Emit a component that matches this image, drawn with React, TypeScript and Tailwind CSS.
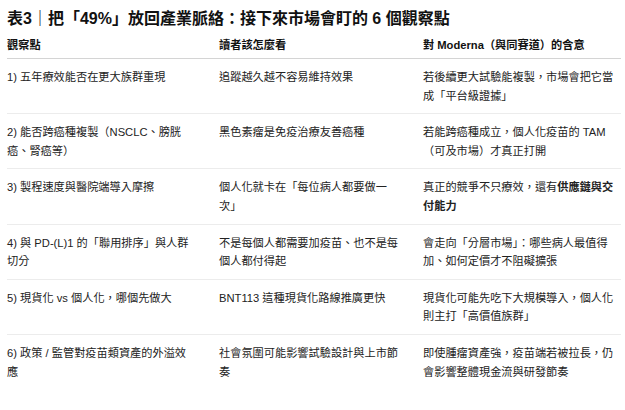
import React from "react";

type Row = { a: React.ReactNode; b: React.ReactNode; c: React.ReactNode };

const rows: Row[] = [
  {
    a: "1) 五年療效能否在更大族群重現",
    b: "追蹤越久越不容易維持效果",
    c: "若後續更大試驗能複製，市場會把它當成「平台級證據」",
  },
  {
    a: "2) 能否跨癌種複製（NSCLC、膀胱癌、腎癌等）",
    b: "黑色素瘤是免疫治療友善癌種",
    c: "若能跨癌種成立，個人化疫苗的 TAM（可及市場）才真正打開",
  },
  {
    a: "3) 製程速度與醫院端導入摩擦",
    b: "個人化就卡在「每位病人都要做一次」",
    c: (
      <>
        真正的競爭不只療效，還有<span className="font-bold">供應鏈與交付能力</span>
      </>
    ),
  },
  {
    a: "4) 與 PD-(L)1 的「聯用排序」與人群切分",
    b: "不是每個人都需要加疫苗、也不是每個人都付得起",
    c: "會走向「分層市場」：哪些病人最值得加、如何定價才不阻礙擴張",
  },
  {
    a: "5) 現貨化 vs 個人化，哪個先做大",
    b: "BNT113 這種現貨化路線推廣更快",
    c: "現貨化可能先吃下大規模導入，個人化則主打「高價值族群」",
  },
  {
    a: "6) 政策 / 監管對疫苗類資產的外溢效應",
    b: "社會氛圍可能影響試驗設計與上市節奏",
    c: "即使腫瘤資產強，疫苗端若被拉長，仍會影響整體現金流與研發節奏",
  },
];

const font = {
  fontFamily:
    '"Liberation Sans", "Noto Sans CJK TC", "Noto Sans CJK SC", sans-serif',
};

export default function App() {
  return (
    <div
      className="w-[625px] h-[410px] bg-white pl-[7px] pr-[4px] pt-[7px] text-[#222]"
      style={font}
    >
      <h1 className="text-[16px] leading-[24px] font-bold text-[#111] mb-[5px]">
        表3｜把「49%」放回產業脈絡：接下來市場會盯的 6 個觀察點
      </h1>
      <div className="w-[614px]">
        <div className="grid grid-cols-[212px_204px_198px] border-b border-[#d4d4d4] pb-[3px] text-[11.2px] leading-[19px] font-bold text-[#111]">
          <div className="pr-[25px]">觀察點</div>
          <div className="pr-[20px]">讀者該怎麼看</div>
          <div>對 Moderna（與同賽道）的含意</div>
        </div>
        {rows.map((r, i) => (
          <div
            key={i}
            className={`grid grid-cols-[212px_204px_198px] pt-[9px] pb-[8px] text-[11.2px] leading-[18.6px] ${
              i < rows.length - 1 ? "border-b border-[#ececec]" : ""
            }`}
          >
            <div className="pr-[25px]">{r.a}</div>
            <div className="pr-[20px]">{r.b}</div>
            <div>{r.c}</div>
          </div>
        ))}
      </div>
    </div>
  );
}
